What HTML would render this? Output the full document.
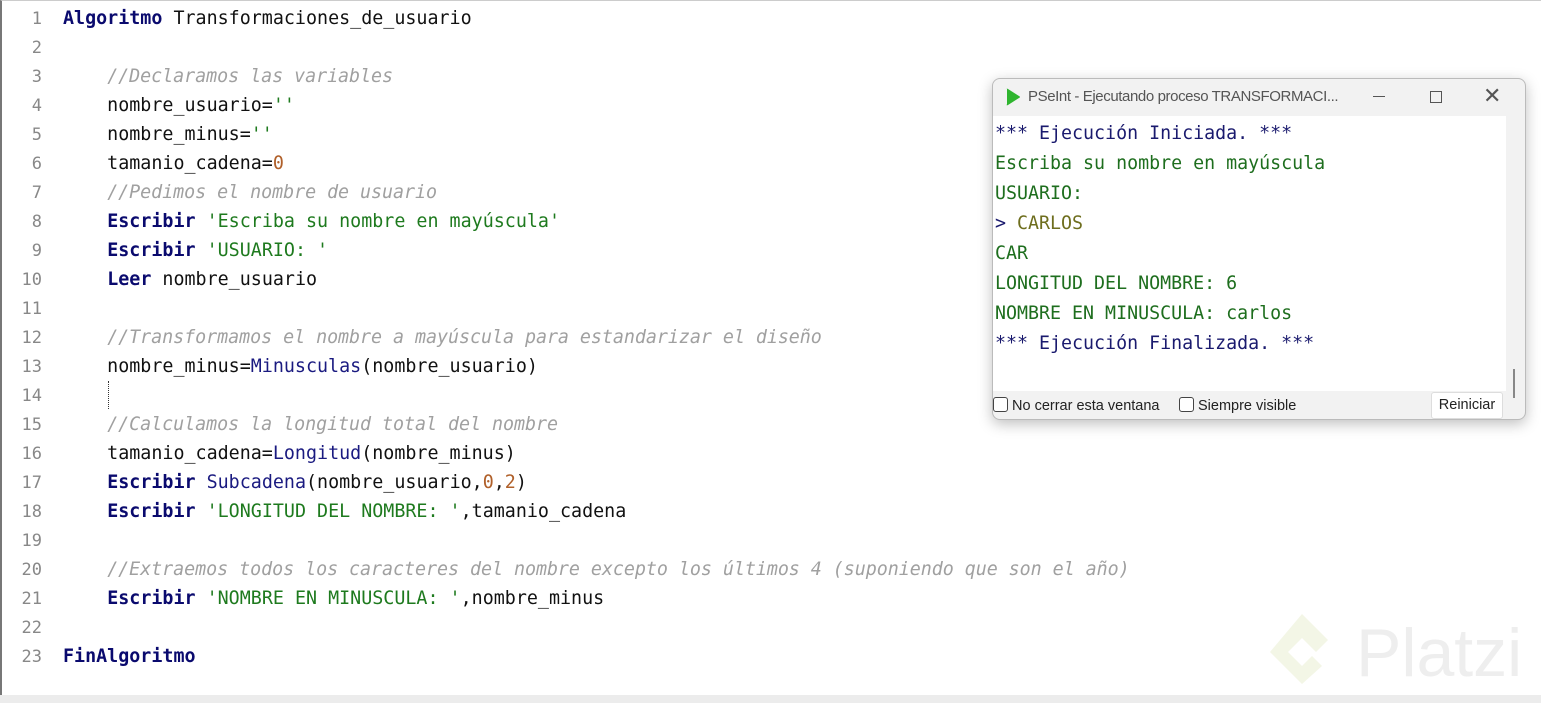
<!DOCTYPE html>
<html><head><meta charset="utf-8"><style>
body{margin:0;width:1541px;height:703px;background:#fff;position:relative;overflow:hidden;font-family:"DejaVu Sans Mono",monospace}
.ed{position:absolute;left:0;top:0;width:1541px;height:695px;border-left:2px solid #777;border-top:1px solid #ccc;box-sizing:border-box}
.bot{position:absolute;left:0;top:695px;width:1541px;height:8px;background:#ececec}
.ln{position:absolute;left:0;width:42px;text-align:right;color:#888;font-size:17px}
.cd{position:absolute;left:63px;font-size:18.35px;white-space:pre;color:#111}
.k{color:#0a0a6e;font-weight:bold}.f{color:#1a1a80}.s{color:#1e7a1e}.n{color:#b0602a}.c{color:#a0a0a0;font-style:italic;letter-spacing:-0.05px}
.win{position:absolute;left:992px;top:78px;width:532px;height:340px;background:#f2f2f2;border:1px solid #bbb;border-radius:8px;box-shadow:0 4px 14px rgba(0,0,0,.25);overflow:hidden}
.tt{position:absolute;left:35px;top:9px;font-family:"Liberation Sans",sans-serif;font-size:15px;letter-spacing:-0.4px;color:#555;white-space:nowrap}
.con{position:absolute;left:0;top:37px;width:513px;height:275px;background:#fff}
.cl{position:absolute;left:2px;font-size:18.3px;white-space:pre}
.bl{color:#1a1a6e}.gr{color:#1e6e1e}.ol{color:#6e6e1e}
.bb{position:absolute;font-family:"Liberation Sans",sans-serif;font-size:14.5px;color:#222;top:318px}
.cb{display:inline-block;width:13px;height:13px;border:1px solid #444;border-radius:3px;vertical-align:-2px;margin-right:4px;background:#fff}
</style></head><body>
<div class="ed"></div>
<div class="bot"></div>
<div class="ln" style="top:9px">1</div><div class="cd" style="top:8px"><span class="k">Algoritmo</span> Transformaciones_de_usuario</div>
<div class="ln" style="top:38px">2</div>
<div class="ln" style="top:67px">3</div><div class="cd" style="top:66px">    <span class="c">//Declaramos las variables</span></div>
<div class="ln" style="top:96px">4</div><div class="cd" style="top:95px">    nombre_usuario=<span class="s">''</span></div>
<div class="ln" style="top:125px">5</div><div class="cd" style="top:124px">    nombre_minus=<span class="s">''</span></div>
<div class="ln" style="top:154px">6</div><div class="cd" style="top:153px">    tamanio_cadena=<span class="n">0</span></div>
<div class="ln" style="top:183px">7</div><div class="cd" style="top:182px">    <span class="c">//Pedimos el nombre de usuario</span></div>
<div class="ln" style="top:212px">8</div><div class="cd" style="top:211px">    <span class="k">Escribir</span> <span class="s">'Escriba su nombre en mayúscula'</span></div>
<div class="ln" style="top:241px">9</div><div class="cd" style="top:240px">    <span class="k">Escribir</span> <span class="s">'USUARIO: '</span></div>
<div class="ln" style="top:270px">10</div><div class="cd" style="top:269px">    <span class="k">Leer</span> nombre_usuario</div>
<div class="ln" style="top:299px">11</div>
<div class="ln" style="top:328px">12</div><div class="cd" style="top:327px">    <span class="c">//Transformamos el nombre a mayúscula para estandarizar el diseño</span></div>
<div class="ln" style="top:357px">13</div><div class="cd" style="top:356px">    nombre_minus=<span class="f">Minusculas</span>(nombre_usuario)</div>
<div class="ln" style="top:386px">14</div><div style="position:absolute;left:108px;top:381px;height:28px;border-left:1px dotted #333"></div>
<div class="ln" style="top:415px">15</div><div class="cd" style="top:414px">    <span class="c">//Calculamos la longitud total del nombre</span></div>
<div class="ln" style="top:444px">16</div><div class="cd" style="top:443px">    tamanio_cadena=<span class="f">Longitud</span>(nombre_minus)</div>
<div class="ln" style="top:473px">17</div><div class="cd" style="top:472px">    <span class="k">Escribir</span> <span class="f">Subcadena</span>(nombre_usuario,<span class="n">0</span>,<span class="n">2</span>)</div>
<div class="ln" style="top:502px">18</div><div class="cd" style="top:501px">    <span class="k">Escribir</span> <span class="s">'LONGITUD DEL NOMBRE: '</span>,tamanio_cadena</div>
<div class="ln" style="top:531px">19</div>
<div class="ln" style="top:560px">20</div><div class="cd" style="top:559px">    <span class="c">//Extraemos todos los caracteres del nombre excepto los últimos 4 (suponiendo que son el año)</span></div>
<div class="ln" style="top:589px">21</div><div class="cd" style="top:588px">    <span class="k">Escribir</span> <span class="s">'NOMBRE EN MINUSCULA: '</span>,nombre_minus</div>
<div class="ln" style="top:618px">22</div>
<div class="ln" style="top:647px">23</div><div class="cd" style="top:646px"><span class="k">FinAlgoritmo</span></div>

<svg style="position:absolute;left:1268px;top:606px" width="273" height="86">
<path d="M34 8 L60 34 L48 46 L34 32 L20 46 L34 60 L44 50 L54 60 L34 78 L2 46 Z" fill="#f3f6e6"/>
<text x="88" y="70" font-family="Liberation Sans,sans-serif" font-size="68" fill="#eeeeee">Platzi</text>
</svg>

<div class="win">
<svg style="position:absolute;left:11px;top:9px" width="18" height="18"><path d="M3 1 Q2 0 4 1 L15 8 Q17 9 15 10 L4 17 Q2 18 3 16 Z" fill="#2fb52f"/></svg>
<div class="tt">PSeInt - Ejecutando proceso TRANSFORMACI...</div>
<div style="position:absolute;left:380px;top:17px;width:12px;height:1px;background:#555"></div>
<div style="position:absolute;left:437px;top:12px;width:10px;height:10px;border:1px solid #555"></div>
<div style="position:absolute;left:490px;top:4px;font-family:'Liberation Sans';font-size:22px;color:#555">✕</div>
<div class="con">
<div class="cl bl" style="top:7px">*** Ejecución Iniciada. ***</div>
<div class="cl gr" style="top:37px">Escriba su nombre en mayúscula</div>
<div class="cl gr" style="top:67px">USUARIO:</div>
<div class="cl" style="top:97px"><span class="bl">&gt;</span> <span class="ol">CARLOS</span></div>
<div class="cl gr" style="top:127px">CAR</div>
<div class="cl gr" style="top:157px">LONGITUD DEL NOMBRE: 6</div>
<div class="cl gr" style="top:187px">NOMBRE EN MINUSCULA: carlos</div>
<div class="cl bl" style="top:217px">*** Ejecución Finalizada. ***</div>
</div>
<div style="position:absolute;left:520px;top:290px;width:2px;height:29px;background:#888"></div>
<div class="bb" style="left:0"><span class="cb"></span>No cerrar esta ventana</div>
<div class="bb" style="left:186px"><span class="cb"></span>Siempre visible</div>
<div style="position:absolute;left:438px;top:313px;width:70px;height:25px;background:#fff;border:1px solid #ddd;border-radius:3px;font-family:'Liberation Sans';font-size:14.5px;line-height:25px;text-align:center;color:#222">Reiniciar</div>
</div>
</body></html>
